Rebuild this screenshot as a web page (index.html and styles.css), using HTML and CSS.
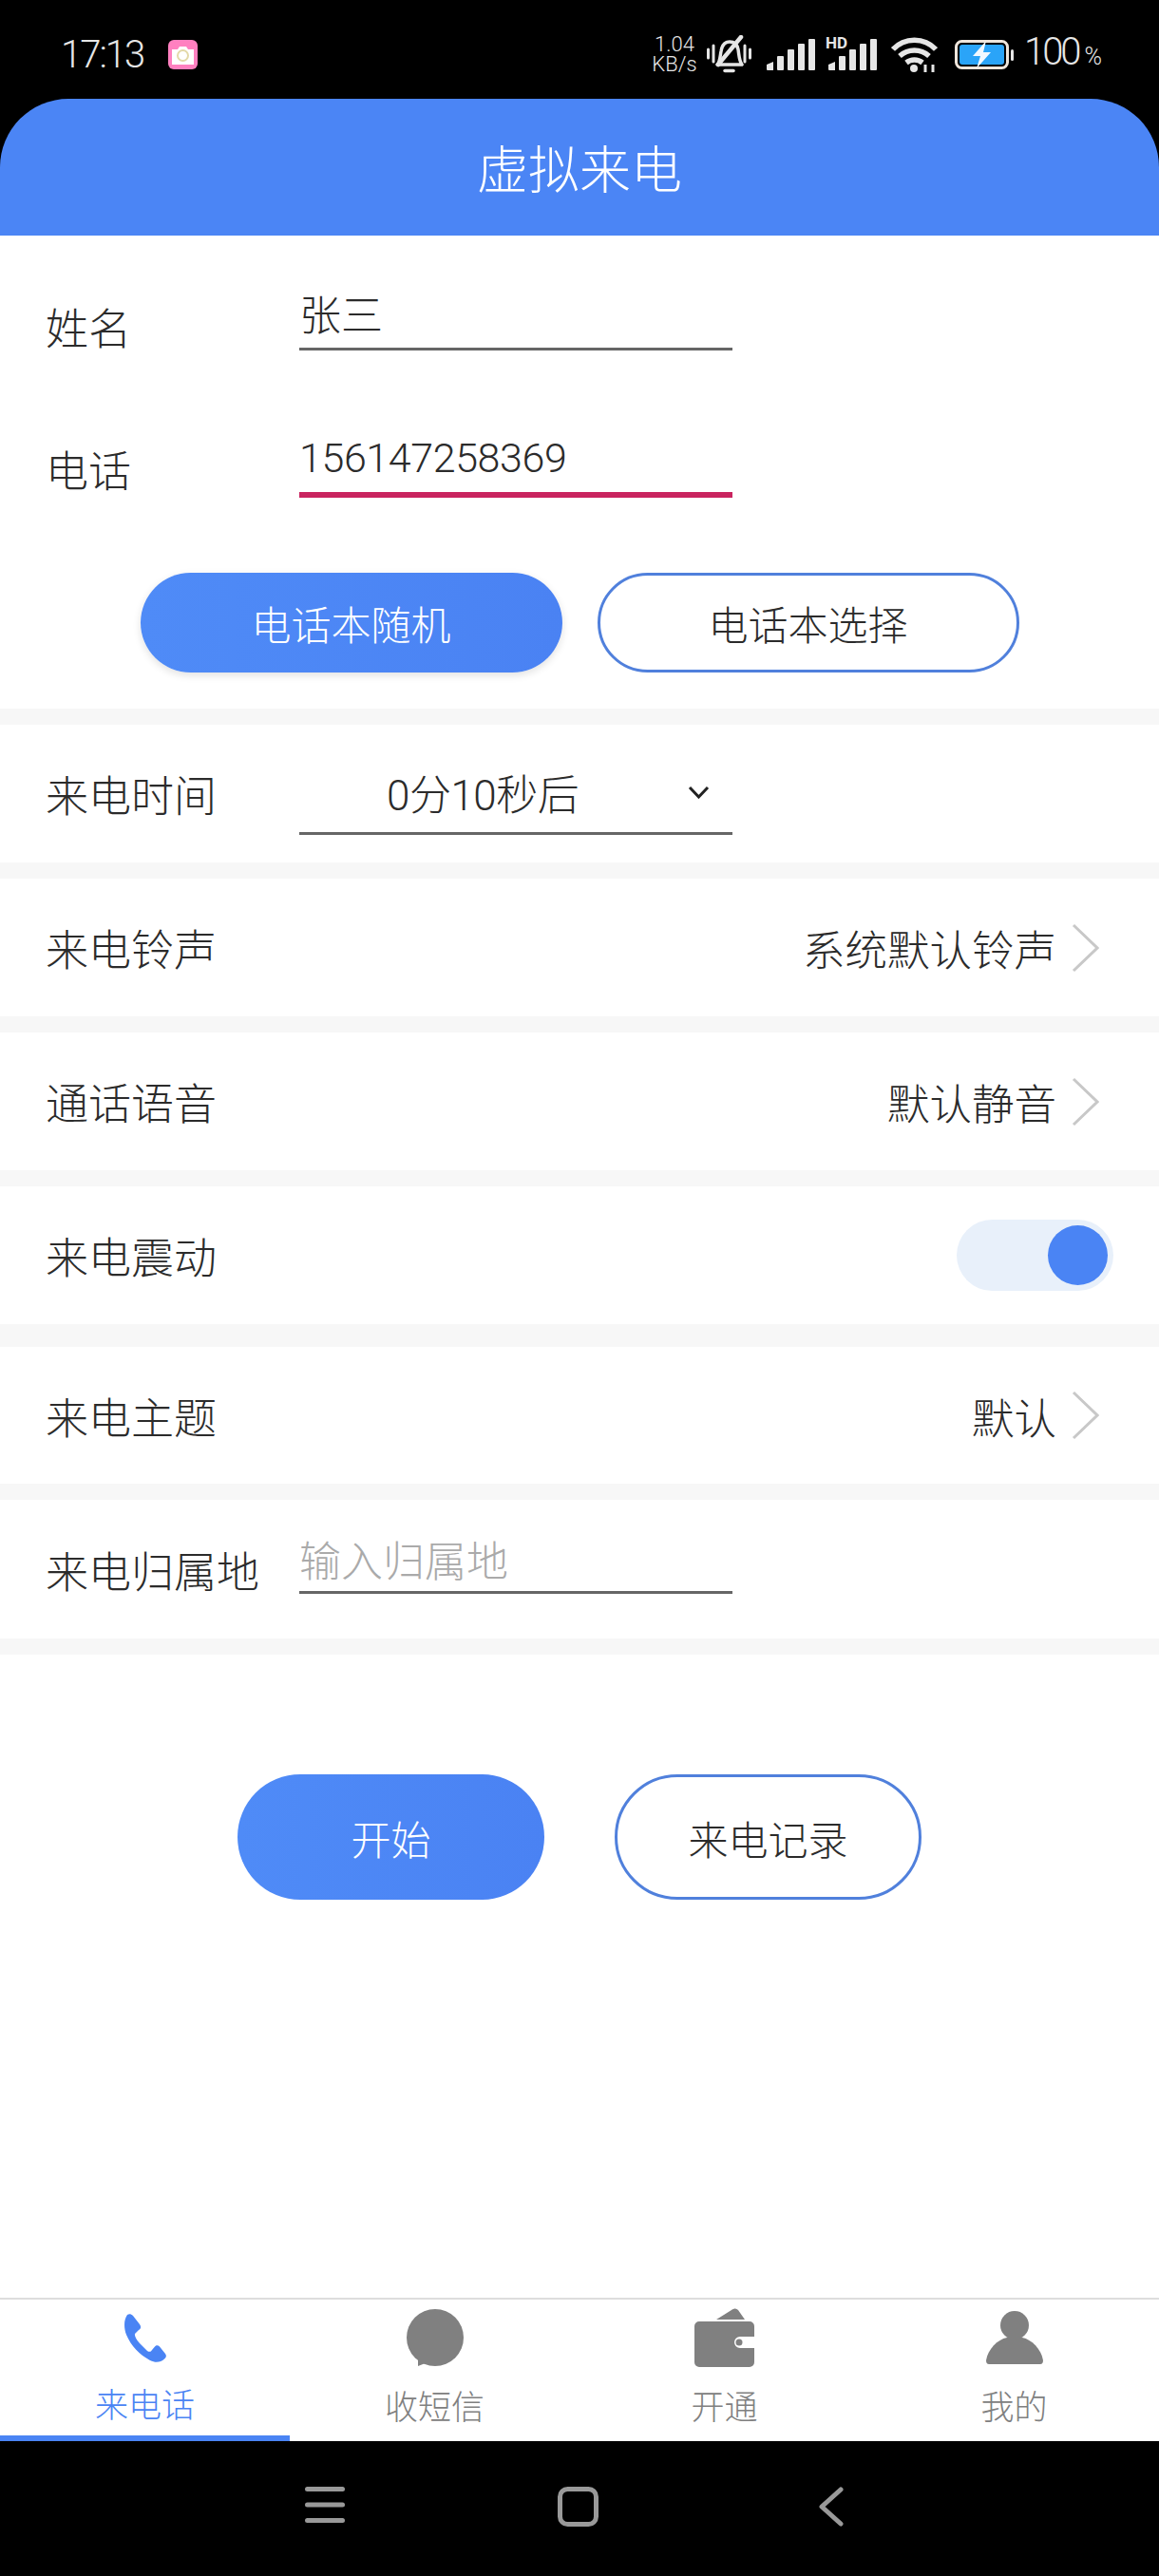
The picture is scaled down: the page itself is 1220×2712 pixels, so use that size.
FILE: index.html
```html
<!DOCTYPE html>
<html lang="zh-CN">
<head>
<meta charset="UTF-8" />
<meta name="viewport" content="width=device-width, initial-scale=1" />
<title>虚拟来电</title>
<link rel="stylesheet" href="styles.css">
</head>
<body>
<div class="screen">

  <!-- system status bar -->
  <div class="status-bar">
    <div class="status-left">
      <span class="clock">17:13</span>
      <svg class="cam-icon" width="31" height="31" viewBox="0 0 31 31">
        <rect width="31" height="31" rx="6" fill="#ff80c0"/>
        <path d="M4 10h6l2-3h7l2 3h6v16H4z" fill="#fff"/>
        <circle cx="15.500" cy="16.500" r="5.500" fill="none" stroke="#e3d9a8" stroke-width="2"/>
      </svg>
    </div>
    <div class="status-right">
      <div class="speed"><span>1.04</span><span>KB/s</span></div>
      <svg class="bell" width="47" height="40" viewBox="0 0 47 40" fill="none" stroke="#e6e6e6">
        <path d="M11 31c3-3 3-9 4-14 1-6 4-10 9-10s8 3 9 8c1 6 1 12 4 16z" stroke-width="3.500" stroke-linejoin="round"/>
        <path d="M36 2 12 31" stroke-width="4.500" stroke-linecap="round"/>
        <path d="M19 37.500h9" stroke-width="3.500" stroke-linecap="round"/>
        <path d="M1.500 15v9M7 11v17M40 11v17M45.500 15v9" stroke-width="3" stroke-linecap="round"/>
      </svg>
      <svg class="signal" width="51" height="33" viewBox="0 0 51 33" fill="#e6e6e6">
        <path d="M0 27l7-3v9H1a1 1 0 0 1-1-1z"/>
        <rect x="11" y="18" width="7" height="15" rx="1"/>
        <rect x="22" y="11" width="7" height="22" rx="1"/>
        <rect x="33" y="5" width="7" height="28" rx="1"/>
        <rect x="44" y="0" width="7" height="33" rx="1"/>
      </svg>
      <div class="signal-hd">
        <span class="hd">HD</span>
        <svg width="51" height="33" viewBox="0 0 51 33" fill="#e6e6e6">
          <path d="M0 27l7-3v9H1a1 1 0 0 1-1-1z"/>
          <rect x="11" y="18" width="7" height="15" rx="1"/>
          <rect x="22" y="11" width="7" height="22" rx="1"/>
          <rect x="33" y="5" width="7" height="28" rx="1"/>
          <rect x="44" y="0" width="7" height="33" rx="1"/>
        </svg>
      </div>
      <svg class="wifi" width="49" height="37" viewBox="0 0 49 37" fill="none" stroke="#e6e6e6" stroke-width="5.500">
        <path d="M2 13C14 0 35 0 47 13"/>
        <path d="M9 20c9-8 22-8 31 0"/>
        <path d="M16 27c5-4 12-4 17 0"/>
        <circle cx="24" cy="33" r="4" fill="#e6e6e6" stroke="none"/>
        <path d="M36 37v-8M44 37v-8" stroke-width="3"/>
      </svg>
      <svg class="battery" width="62" height="31" viewBox="0 0 62 31">
        <rect x="1.500" y="1.500" width="54" height="28" rx="6" fill="#000" stroke="#efe6dc" stroke-width="3"/>
        <rect x="5" y="5" width="47" height="21" rx="3" fill="#2aa4f8"/>
        <rect x="59" y="10" width="3" height="12" rx="1.500" fill="#e6e6e6"/>
        <path d="M33 1 19 17h8l-4 13 15-17h-8z" fill="#f2f9ff"/>
      </svg>
      <div class="percent">100<small>%</small></div>
    </div>
  </div>

  <div class="title-bar">虚拟来电</div>

  <main class="content">
    <section class="form">
      <div class="form-row">
        <div class="label">姓名</div>
        <div class="field field-name">张三</div>
      </div>
      <div class="form-row form-row-phone">
        <div class="label">电话</div>
        <div class="field field-phone">156147258369</div>
      </div>
      <div class="pick-btns">
        <button class="btn btn-fill btn-pick">电话本随机</button>
        <button class="btn btn-line btn-pick">电话本选择</button>
      </div>
    </section>

    <div class="row">
      <div class="label">来电时间</div>
      <div class="field field-select">
        <span>0分10秒后</span>
        <svg width="23" height="14" viewBox="0 0 23 14" fill="none" stroke="#222" stroke-width="3"><path d="M2 2l9.500 10L21 2"/></svg>
      </div>
    </div>
    <div class="row">
      <div class="label">来电铃声</div>
      <div class="value">系统默认铃声</div>
      <svg class="arrow" width="29" height="52" viewBox="0 0 29 52" fill="none" stroke="#c8c8c8" stroke-width="3"><path d="M2 2l25 24L2 50"/></svg>
    </div>
    <div class="row">
      <div class="label">通话语音</div>
      <div class="value">默认静音</div>
      <svg class="arrow" width="29" height="52" viewBox="0 0 29 52" fill="none" stroke="#c8c8c8" stroke-width="3"><path d="M2 2l25 24L2 50"/></svg>
    </div>
    <div class="row">
      <div class="label">来电震动</div>
      <div class="toggle"><div class="knob"></div></div>
    </div>
    <div class="row row-wide">
      <div class="label">来电主题</div>
      <div class="value">默认</div>
      <svg class="arrow" width="29" height="52" viewBox="0 0 29 52" fill="none" stroke="#c8c8c8" stroke-width="3"><path d="M2 2l25 24L2 50"/></svg>
    </div>
    <div class="row row-last">
      <div class="label">来电归属地</div>
      <div class="field field-area">输入归属地</div>
    </div>

    <div class="main-btns">
      <button class="btn btn-fill btn-main">开始</button>
      <button class="btn btn-line btn-main">来电记录</button>
    </div>
  </main>

  <nav class="tabs">
    <div class="tab active">
      <div class="tab-icon">
        <svg width="44" height="51" viewBox="0 0 44 51" fill="#4a84f4"><path d="M3 1C5-.5 7 0 9 2l7 9c2 3 1 5-1 6l-4 4c-.5 2 1 6 5 10l8 8c2 1.500 4 1 5-1l3-3.500c1.500-2 3.500-1.500 5 0l6 7.500c1.500 2 1 4-1 5.500-4 3.500-9 4.500-15 1.500C16 43 7 34 2 22-1 14-.5 6 3 1z"/></svg>
      </div>
      <div class="tab-text">来电话</div>
    </div>
    <div class="tab">
      <div class="tab-icon">
        <svg width="60" height="60" viewBox="0 0 60 60" fill="#808080"><circle cx="30" cy="30" r="30"/><path d="M12 60V46l18 7z"/></svg>
      </div>
      <div class="tab-text">收短信</div>
    </div>
    <div class="tab">
      <div class="tab-icon">
        <svg width="63" height="62" viewBox="0 0 63 62" fill="#808080">
          <path d="M23 12 39 2c3-2 5-2 7 0l7 10z"/>
          <path d="M5 14h53a5 5 0 0 1 5 5v11H48a6 6 0 0 0 0 12h15v15a5 5 0 0 1-5 5H5a5 5 0 0 1-5-5V19a5 5 0 0 1 5-5z"/>
          <circle cx="47" cy="36" r="3.500"/>
        </svg>
      </div>
      <div class="tab-text">开通</div>
    </div>
    <div class="tab">
      <div class="tab-icon">
        <svg width="60" height="56" viewBox="0 0 60 56" fill="#808080"><ellipse cx="30" cy="15" rx="15" ry="15"/><path d="M0 52C2 40 12 30 22 28h16c10 2 20 12 22 24q0 4-3 4H3q-3 0-3-4z"/></svg>
      </div>
      <div class="tab-text">我的</div>
    </div>
  </nav>

  <!-- system navigation bar -->
  <div class="nav-bar">
    <svg width="42" height="38" viewBox="0 0 42 38" fill="#999"><rect y="0" width="42" height="5" rx="2.500"/><rect y="16.500" width="42" height="5" rx="2.500"/><rect y="33" width="42" height="5" rx="2.500"/></svg>
    <svg width="43" height="42" viewBox="0 0 43 42" fill="none" stroke="#999" stroke-width="5"><rect x="2.500" y="2.500" width="38" height="37" rx="8"/></svg>
    <svg class="nav-back" width="26" height="42" viewBox="0 0 26 42" fill="none" stroke="#999" stroke-width="5" stroke-linecap="round" stroke-linejoin="round"><path d="M23 3 3 21l20 18"/></svg>
  </div>
</div>
</body>
</html>
```

FILE: styles.css
```css
* {
  box-sizing: border-box;
}
body {
  margin: 0;
  background: #000;
  font-family: Roboto, "Noto Sans CJK SC", sans-serif;
  font-weight: 300;
  color: #2b2b2b;
}
.screen {
  width: 1220px;
  height: 2712px;
  display: flex;
  flex-direction: column;
  background: #000;
  overflow: hidden;
}

/* status bar */
.status-bar {
  height: 104px;
  flex: none;
  display: flex;
  justify-content: space-between;
  align-items: center;
  padding: 10px 60px 0 64px;
  color: #e6e6e6;
}
.status-left {
  display: flex;
  align-items: center;
}
.clock {
  font-size: 40px;
  width: 113px;
  letter-spacing: -2px;
}
.status-right {
  display: flex;
  align-items: center;
}
.speed {
  display: flex;
  flex-direction: column;
  align-items: center;
  width: 44px;
  font-size: 22px;
  line-height: 21px;
  white-space: nowrap;
}
.bell {
  margin-left: 12px;
}
.signal {
  margin-left: 16px;
}
.signal-hd {
  margin-left: 14px;
  display: flex;
  flex-direction: column;
  justify-content: flex-end;
  position: relative;
}
.hd {
  position: absolute;
  left: -3px;
  top: -4px;
  font-size: 17px;
  line-height: 17px;
  font-weight: 700;
}
.wifi {
  margin-left: 15px;
}
.battery {
  margin-left: 18px;
}
.percent {
  margin-left: 11px;
  font-size: 40px;
  line-height: 40px;
  letter-spacing: -3px;
  white-space: nowrap;
}
.percent small {
  font-size: 25px;
  letter-spacing: 0;
  margin-left: 6px;
}

/* title */
.title-bar {
  height: 144px;
  flex: none;
  background: #4b85f5;
  border-radius: 72px 72px 0 0;
  color: #fff;
  font-size: 54px;
  display: flex;
  align-items: center;
  justify-content: center;
  padding-bottom: 2px;
}

.content {
  flex: 1;
  background: #fff;
}

/* name and phone */
.form {
  padding: 20px 0 38px;
}
.form-row {
  height: 151px;
  display: flex;
  align-items: center;
  padding-left: 48px;
}
.form-row-phone {
  height: 149px;
}
.label {
  width: 267px;
  flex: none;
  font-size: 45px;
  white-space: nowrap;
}
.field {
  width: 456px;
  font-size: 44px;
  display: flex;
  align-items: center;
  border-bottom: 3px solid #666;
}
.field-name {
  height: 70px;
  margin-bottom: 20px;
  padding-bottom: 6px;
}
.field-phone {
  height: 79px;
  margin-bottom: 18px;
  font-size: 43px;
  letter-spacing: -0.4px;
  border-bottom: 6px solid #c9245f;
}
.field-select {
  height: 86px;
  padding: 0 24px 0 92px;
  justify-content: space-between;
  letter-spacing: -0.5px;
}
.field-area {
  height: 72px;
  margin-bottom: 20px;
  color: #aaa;
}

/* buttons */
.btn {
  font-family: inherit;
  font-weight: inherit;
  border-radius: 70px;
  padding: 0;
}
.btn-fill {
  border: none;
  color: #fff;
  background: linear-gradient(90deg, #4f8bf7, #4a82f3);
}
.btn-line {
  border: 3px solid #5080dc;
  background: #fff;
  color: #2b2b2b;
}
.pick-btns {
  display: flex;
  justify-content: center;
  gap: 37px;
  margin-top: 35px;
}
.btn-pick {
  width: 444px;
  height: 105px;
  font-size: 42px;
}
.btn-pick.btn-fill {
  box-shadow: 0 3px 8px rgba(0, 0, 0, 0.12);
}
.main-btns {
  display: flex;
  justify-content: center;
  gap: 74px;
  margin-top: 126px;
}
.btn-main {
  width: 323px;
  height: 132px;
  font-size: 42px;
}

/* setting rows */
.row {
  height: 162px;
  border-top: 17px solid #f7f7f7;
  display: flex;
  align-items: center;
  padding: 0 48px;
}
.row-wide {
  height: 168px;
  border-top-width: 24px;
}
.row-last {
  height: 180px;
  border-bottom: 17px solid #f7f7f7;
}
.value {
  margin-left: auto;
  font-size: 44.5px;
}
.arrow {
  margin-left: 16px;
  margin-right: 15px;
}
.toggle {
  margin-left: auto;
  width: 165px;
  height: 75px;
  border-radius: 38px;
  background: #e8f0fa;
  display: flex;
  justify-content: flex-end;
  align-items: center;
  padding-right: 6px;
}
.knob {
  width: 63px;
  height: 63px;
  border-radius: 50%;
  background: #4a84f4;
}

/* tab bar */
.tabs {
  height: 151px;
  flex: none;
  background: #fff;
  border-top: 2px solid #ddd;
  display: grid;
  grid-template-columns: repeat(4, 1fr);
}
.tab {
  display: flex;
  flex-direction: column;
  align-items: center;
  padding-top: 9px;
  color: #808080;
}
.tab.active {
  color: #4a84f4;
  border-bottom: 6px solid #4a84f4;
}
.tab-icon {
  height: 62px;
  display: flex;
  align-items: center;
  justify-content: center;
}
.tab-text {
  margin-top: 22px;
  font-size: 35px;
  line-height: 44px;
}
.tab.active .tab-text {
  margin-top: 20px;
}

/* nav bar */
.nav-bar {
  height: 142px;
  flex: none;
  display: flex;
  justify-content: center;
  align-items: flex-start;
  gap: 224px;
  padding: 48px 12px 0 0;
}
.nav-back {
  margin-left: 8px;
}
```
